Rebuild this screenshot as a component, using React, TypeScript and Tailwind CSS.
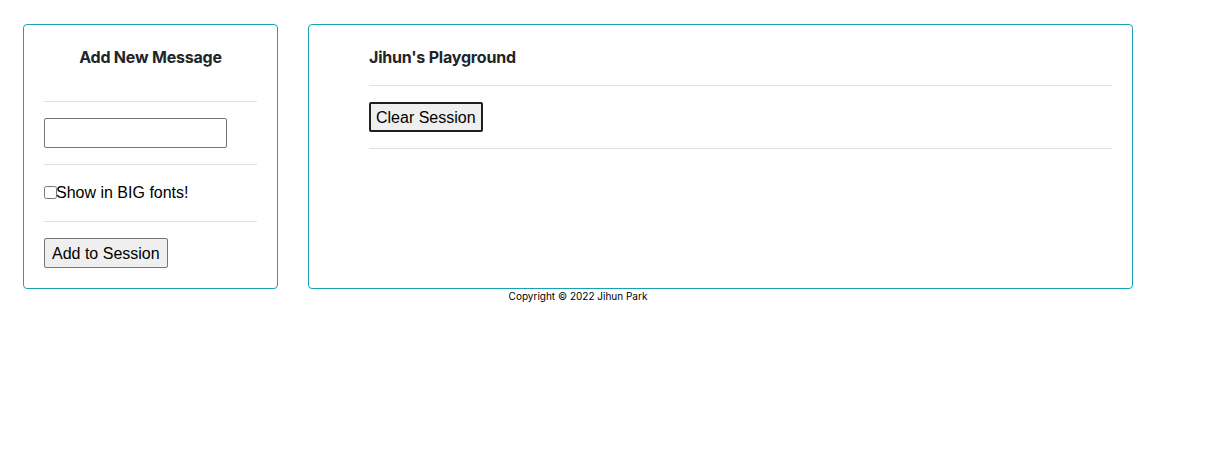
import { useState } from 'react';

export default function App() {
  const [message, setMessage] = useState('');
  const [big, setBig] = useState(false);

  return (
    <div className="min-h-[465px] bg-white font-['Liberation_Sans',Arial,sans-serif] text-[#212529]">
      <div className="w-[1133px] pl-[23px] pt-[24px]">
        <div className="flex items-stretch gap-[30px]">
          {/* Left card */}
          <div className="w-[255px] shrink-0 rounded-[4px] border border-[#17a2b8] px-[20px] pt-[20px] pb-[20px]">
            <h2 className="text-center font-['Inter',sans-serif] text-[16px] font-bold leading-[24px] tracking-[-0.2px]">Add New Message</h2>
            <hr className="mt-[32px] border-t border-[#dee2e6]" />
            <div className="py-[16px]">
              <input
                type="text"
                value={message}
                onChange={(e) => setMessage(e.target.value)}
                className="block h-[30px] w-[183px] rounded-[2px] border border-[#767676] px-1 text-[16px] outline-none"
              />
            </div>
            <hr className="border-t border-[#dee2e6]" />
            <label className="flex items-center py-[16px] text-[16px] leading-[24px] text-black">
              <input
                type="checkbox"
                checked={big}
                onChange={(e) => setBig(e.target.checked)}
                className="m-0 -mt-[2px] h-[13px] w-[13px]"
              />
              <span className="-ml-[1px]">Show in BIG fonts!</span>
            </label>
            <hr className="border-t border-[#dee2e6]" />
            <div className="pt-[16px]">
              <button className="h-[30px] rounded-[2px] border border-[#767676] bg-[#efefef] px-[7px] pt-[2px] text-[16px] leading-none text-black">
                Add to Session
              </button>
            </div>
          </div>

          {/* Right card */}
          <div className="w-[825px] shrink-0 rounded-[4px] border border-[#17a2b8] pl-[60px] pr-[20px] pt-[20px]">
            <h2 className="font-['Inter',sans-serif] text-[16px] font-bold leading-[24px] tracking-[-0.2px]">Jihun's Playground</h2>
            <hr className="mt-[16px] border-t border-[#dee2e6]" />
            <div className="py-[16px]">
              <button className="h-[30px] rounded-[2px] border-2 border-[#1f1f1f] bg-[#efefef] px-[5px] pt-[2px] text-[16px] leading-none text-black">
                Clear Session
              </button>
            </div>
            <hr className="border-t border-[#dee2e6]" />
          </div>
        </div>
        <p className="text-center font-['Inter',sans-serif] text-[10px] leading-[15px] text-black">Copyright © 2022 Jihun Park</p>
      </div>
    </div>
  );
}
